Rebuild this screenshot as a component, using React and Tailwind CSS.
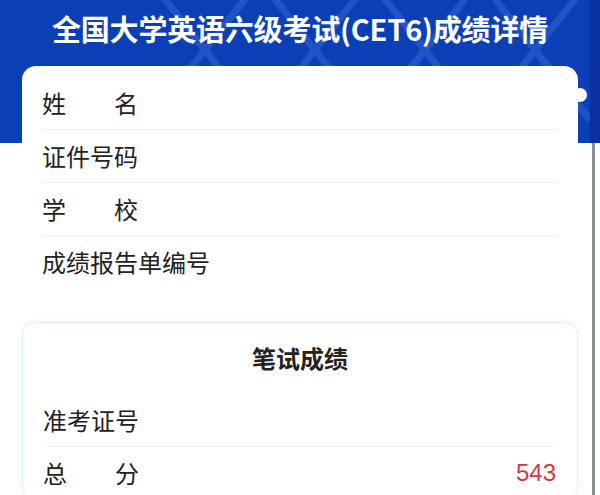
export default function App() {
  const info = [
    { label: ['姓', '名'] },
    { label: ['证件号码'] },
    { label: ['学', '校'] },
    { label: ['成绩报告单编号'], wide: true },
  ]

  return (
    <div className="relative w-[600px] h-[495px] overflow-hidden bg-white font-['Noto_Sans_CJK_SC','Noto_Sans',sans-serif] text-[#222]">
      {/* HEADER */}
      <div className="relative h-[143px] bg-[#0b3fb6] overflow-hidden">
        <svg className="absolute inset-0" width="600" height="143" viewBox="0 0 600 143">
          <g stroke="#3a6fd6" strokeOpacity="0.45" strokeWidth="7" fill="none">
            <path d="M150 -20 L260 120 M260 -20 L150 120" />
            <path d="M260 -20 L370 120 M370 -20 L260 120" />
            <path d="M370 -20 L480 120 M480 -20 L370 120" />
            <path d="M480 -20 L590 120 M590 -20 L480 120" />
          </g>
        </svg>
        <div className="relative h-[56px] flex items-center justify-center">
          <h1 className="text-[29px] font-bold text-white leading-none tracking-[-0.2px]">全国大学英语六级考试(CET6)成绩详情</h1>
        </div>
      </div>

      {/* INFO CARD */}
      <div className="relative mt-[-77px] ml-[22px] w-[556px] bg-white rounded-[14px] px-5 pt-[11px] pb-[12px]">
        <div className="absolute right-[-9px] top-[22px] w-[14px] h-[14px] rounded-full bg-white" />
        {info.map((row, i) => (
          <div
            key={i}
            className={`h-[52px] flex items-center text-[24px] leading-none ${i < info.length - 1 ? 'border-b border-[#f0f0f0] box-content' : ''}`}
          >
            {row.label.length > 1 ? (
              <div className="w-[96px] flex justify-between">
                <span>{row.label[0]}</span>
                <span>{row.label[1]}</span>
              </div>
            ) : (
              <span>{row.label[0]}</span>
            )}
          </div>
        ))}
      </div>

      {/* SCORE CARD */}
      <div className="mt-[22px] ml-[22px] w-[556px] bg-white rounded-[14px] border border-[#dcf4f1] shadow-[0_0_6px_rgba(120,210,200,0.15)] px-5 pt-[11px]">
        <div className="h-[48px] flex items-center justify-center text-[24px] font-bold leading-none">笔试成绩</div>
        <div className="mt-[12px] h-[52px] flex items-center text-[24px] leading-none border-b border-[#f0f0f0] box-content">准考证号</div>
        <div className="h-[52px] flex items-center justify-between text-[24px] leading-none">
          <div className="w-[96px] flex justify-between">
            <span>总</span>
            <span>分</span>
          </div>
          <span className="font-['Liberation_Sans',sans-serif] text-[#d8373f] mr-[1px]">543</span>
        </div>
      </div>

      {/* right edge strip */}
      <div className="absolute right-0 top-0 w-[10px] h-[143px] bg-[#0a30a0]" />
      <div className="absolute left-[592px] top-[143px] w-[3px] bottom-0 bg-[#8c9197]" />
    </div>
  )
}
